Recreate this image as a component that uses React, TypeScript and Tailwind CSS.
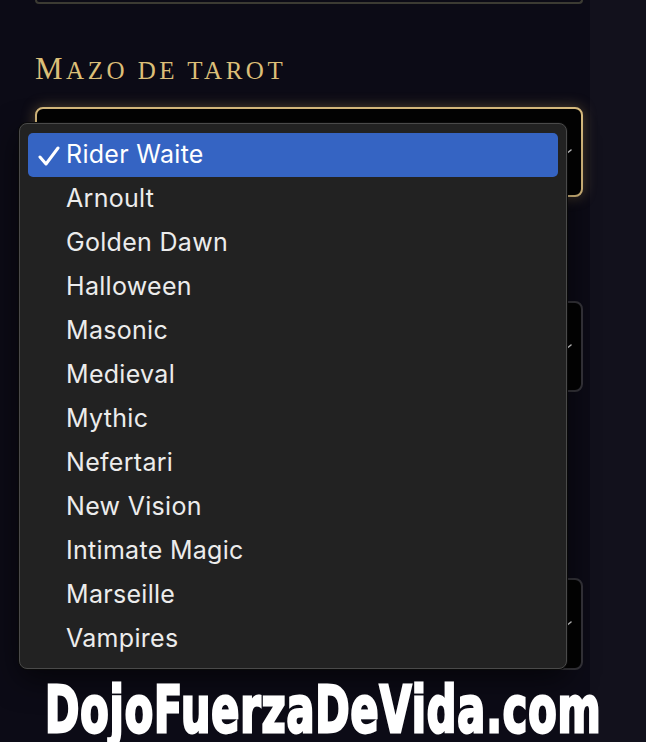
import React from 'react';

const decks = [
  'Rider Waite',
  'Arnoult',
  'Golden Dawn',
  'Halloween',
  'Masonic',
  'Medieval',
  'Mythic',
  'Nefertari',
  'New Vision',
  'Intimate Magic',
  'Marseille',
  'Vampires',
];

const Chevron = () => (
  <svg className="absolute right-[8px] top-1/2 -translate-y-1/2 w-[14px] h-[10px]" viewBox="0 0 14 10" fill="none">
    <path d="M2 3l5 4 5-4" stroke="#e5e5e5" strokeWidth="1.6" strokeLinecap="round" strokeLinejoin="round" />
  </svg>
);

export default function App() {
  return (
    <div className="w-[646px] h-[742px] bg-[#12111c] overflow-hidden relative" style={{ fontFamily: 'Inter, "Liberation Sans", sans-serif' }}>
      <div className="w-[590px] h-full bg-[#0c0b16] px-[35px] flex flex-col">
        {/* bottom edge of previous field */}
        <div className="w-[548px] h-[4px] border-b-2 border-x-2 border-[#3c3b33] rounded-b-[6px] shrink-0" />

        <h3
          className="mt-[50px] flex items-baseline h-[30px] shrink-0 text-[#dcbf78] tracking-[3.5px]"
          style={{ fontFamily: '"Liberation Serif", serif' }}
        >
          <span className="text-[31px] leading-[30px]">M</span>
          <span className="text-[25px] leading-[30px]">AZO DE TAROT</span>
        </h3>

        <div className="relative shrink-0 mt-[23px] w-[548px] h-[90px] rounded-[8px] border-2 border-[#d8bb7e] bg-[#030303] shadow-[0_0_14px_rgba(214,178,100,0.35)]">
          <Chevron />
        </div>

        {/* fields behind the open menu */}
        <div className="relative shrink-0 mt-[104px] w-[548px] h-[91px] rounded-[8px] border-2 border-[#35343a] bg-[#030303]">
          <Chevron />
        </div>

        <div className="relative shrink-0 mt-[186px] w-[548px] h-[92px] rounded-[8px] border-2 border-[#35343a] bg-[#030303]">
          <Chevron />
        </div>
      </div>

      {/* open native-style menu */}
      <div className="absolute left-[19px] top-[123px] w-[548px] h-[546px] rounded-[8px] bg-[#222222] border border-[#4a4a4a] shadow-[0_0_0_1px_#0a0a0a,0_10px_30px_rgba(0,0,0,0.6)] px-[8px] pt-[9px]">
        {decks.map((d, i) => (
          <div
            key={d}
            className={
              'relative h-[44px] flex items-center pl-[38px] text-[25px] tracking-[0.3px] text-[#ececec] rounded-[5px] ' +
              (i === 0 ? 'bg-[#3564c3] text-white' : '')
            }
          >
            {i === 0 && (
              <svg className="absolute left-[10px] top-[13px] w-[22px] h-[20px]" viewBox="0 0 22 20" fill="none">
                <path d="M2 11l6 7L20 2" stroke="#ffffff" strokeWidth="3" strokeLinecap="round" strokeLinejoin="round" />
              </svg>
            )}
            {d}
          </div>
        ))}
      </div>

      {/* watermark */}
      <div
        className="absolute left-[45px] top-[682px] whitespace-nowrap text-white text-[46px] font-bold leading-[40px] tracking-[0.9px] origin-top-left scale-y-[1.4] [-webkit-text-stroke:2px_white]"
        style={{ fontFamily: '"DejaVu Sans Condensed", "DejaVu Sans", sans-serif' }}
      >
        DojoFuerzaDeVida.com
      </div>
    </div>
  );
}
